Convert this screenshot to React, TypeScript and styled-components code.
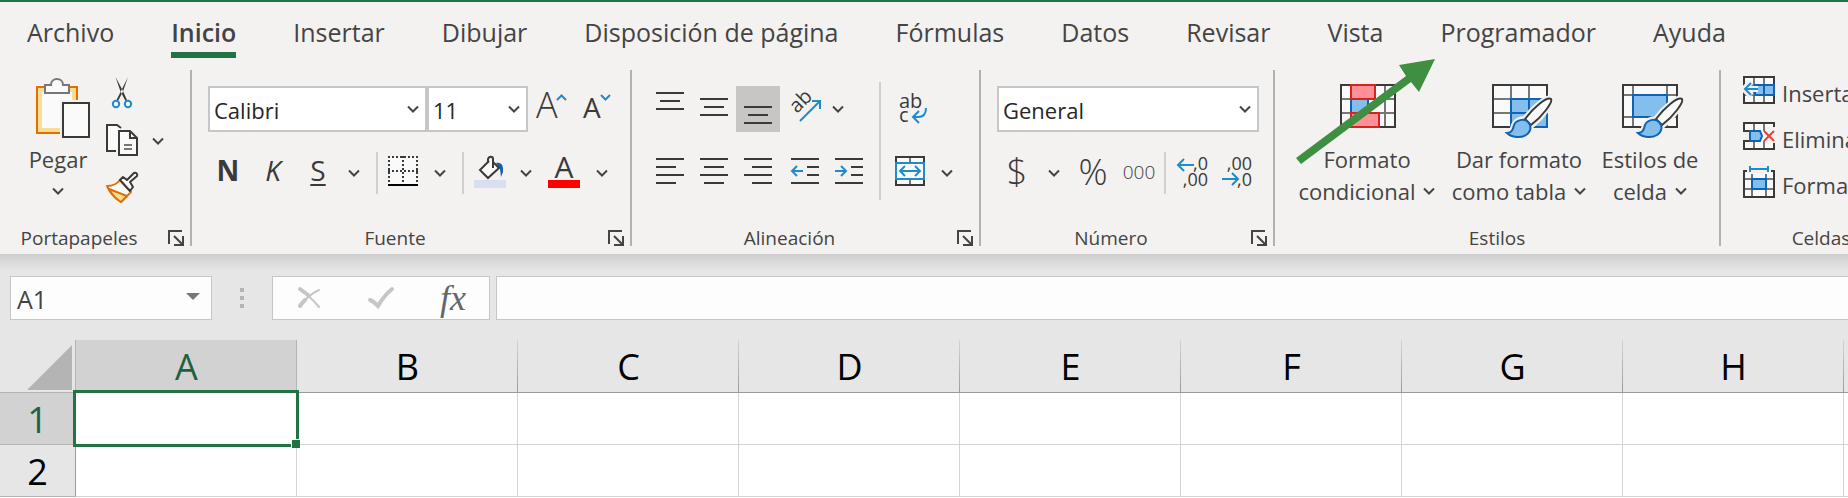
import React from "react";
import styled, { createGlobalStyle, css } from "styled-components";

const ink = "#3b3a39";
const text = "#444444";
const blue = "#1e8bcd";
const deepBlue = "#0f63b5";
const skyFill = "#83beec";
const paper = "#fafafa";
const ribbonBg = "#f3f2f1";
const green = "#217346";
const uiFont = `"Open Sans", "Noto Sans", sans-serif`;

const GlobalStyle = createGlobalStyle`
  *, *::before, *::after { box-sizing: border-box; }
  body { margin: 0; background: #ffffff; font-family: ${uiFont}; color: ${text}; }
  button, input, select { font-family: inherit; color: inherit; }
`;

const Page = styled.div`
  overflow: hidden;
`;

const TabBar = styled.nav`
  display: flex;
  gap: 57px;
  padding: 0 27px;
  border-top: 2px solid ${green};
  background: ${ribbonBg};
`;

const Tab = styled.button<{ $active?: boolean }>`
  flex: none;
  padding: 10px 0 0;
  border: 0;
  border-bottom: 6px solid ${(p) => (p.$active ? green : "transparent")};
  background: none;
  font-size: 25px;
  line-height: 40px;
  font-weight: ${(p) => (p.$active ? 600 : 400)};
  white-space: nowrap;
`;

const Ribbon = styled.div`
  display: flex;
  padding-top: 12px;
  background: ${ribbonBg};
`;

const Separator = styled.div`
  flex: none;
  width: 2px;
  margin-bottom: 8px;
  background: #b3b0ad;
`;

const Group = styled.section<{ $min?: number }>`
  flex: none;
  display: flex;
  flex-direction: column;
  justify-content: space-between;
  min-width: ${(p) => p.$min || 0}px;
  height: 184px;
  padding-bottom: 4px;
`;

const GroupBody = styled.div<{ $top?: number; $end?: number; $start?: number }>`
  display: flex;
  padding: ${(p) => p.$top || 0}px ${(p) => p.$end ?? 14}px 0 ${(p) => p.$start ?? 16}px;
`;

const GroupFooter = styled.footer`
  display: flex;
  align-items: center;
  height: 24px;
`;

const GroupTitle = styled.span`
  flex: 1;
  font-size: 19px;
  line-height: 24px;
  text-align: center;
`;

const Launcher = styled.button`
  display: flex;
  width: 32px;
  padding: 0 0 0 10px;
  border: 0;
  background: none;
`;

const Stack = styled.div<{ $gap?: number }>`
  display: flex;
  flex-direction: column;
  gap: ${(p) => p.$gap || 0}px;
`;

const ToolRow = styled.div<{ $gap?: number; $tall?: boolean }>`
  display: flex;
  align-items: center;
  gap: ${(p) => p.$gap || 0}px;
  height: ${(p) => (p.$tall ? 46 : 42)}px;
`;

const ToolPair = styled.div`
  display: flex;
  align-items: center;
  margin-left: 3px;
`;

const ToolButton = styled.button<{ $width?: number; $active?: boolean }>`
  flex: none;
  display: flex;
  align-items: center;
  justify-content: center;
  width: ${(p) => p.$width || 40}px;
  height: 100%;
  padding: 0;
  border: 0;
  background: ${(p) => (p.$active ? "#c8c6c4" : "none")};
  color: ${ink};

  svg { flex: none; overflow: visible; }
`;

const GlyphButton = styled(ToolButton)<{ $size: number; $kind?: "bold" | "italic" | "underline" | "light" }>`
  padding-bottom: 6px;
  font-size: ${(p) => p.$size}px;
  line-height: 36px;
  ${(p) => p.$kind === "bold" && css`font-weight: 700;`}
  ${(p) => p.$kind === "italic" && css`font-style: italic;`}
  ${(p) => p.$kind === "light" && css`font-weight: 300; padding-bottom: 2px;`}
  ${(p) =>
    p.$kind === "underline" &&
    css`text-decoration: underline 2px; text-underline-offset: 3px;`}
`;

const Divider = styled.div`
  flex: none;
  width: 2px;
  height: 42px;
  margin: 0 1px 0 6px;
  background: #d2d0ce;
`;

const SlimDivider = styled(Divider)`
  margin: 0 2px 0 1px;
`;

const TallDivider = styled(Divider)`
  height: 118px;
  margin: -4px 7px -6px 8px;
`;

const ComboWrap = styled.label<{ $width: number }>`
  flex: none;
  display: grid;
  grid-template-columns: 1fr 24px;
  align-items: center;
  width: ${(p) => p.$width}px;
  height: 46px;
  border: 2px solid #c6c6c6;
  background: #ffffff;

  svg { grid-area: 1 / 2; justify-self: center; pointer-events: none; }
`;

const ComboSelect = styled.select`
  grid-area: 1 / 1 / 2 / 3;
  width: 100%;
  height: 42px;
  padding: 2px 24px 0 4px;
  border: 0;
  background: transparent;
  color: #262626;
  font-size: 22px;
  appearance: none;
  outline: 0;
`;

const Combos = styled.div`
  display: flex;
`;

const LargeButton = styled.button<{ $width: number }>`
  position: relative;
  flex: none;
  display: flex;
  flex-direction: column;
  align-items: center;
  width: ${(p) => p.$width}px;
  padding: 8px 0 0;
  border: 0;
  background: none;
  font-size: 22px;
  line-height: 32px;
  white-space: nowrap;

  > svg:first-child { margin-bottom: 5px; overflow: visible; }
`;

const LargeLine = styled.span`
  display: flex;
  align-items: center;
  justify-content: center;
  gap: 8px;
  height: 32px;
`;

const ClipRow = styled.div`
  display: flex;
  align-items: center;
  gap: 8px;
  height: 47px;
`;

const CellsButton = styled.button`
  display: flex;
  align-items: center;
  gap: 7px;
  height: 46px;
  padding: 0;
  border: 0;
  background: none;
  font-size: 22px;
  line-height: 32px;
  white-space: nowrap;
`;

const Pointer = styled.svg`
  position: absolute;
  left: 0;
  top: -16px;
  z-index: 2;
  pointer-events: none;
`;

const FormulaBar = styled.div`
  display: flex;
  align-items: center;
  padding: 22px 0 20px 10px;
  background: linear-gradient(#cdcdcd, #e6e6e6 16px);
`;

const NameBox = styled.label`
  flex: none;
  display: flex;
  align-items: center;
  width: 202px;
  height: 44px;
  padding-right: 11px;
  border: 1px solid #c6c6c6;
  background: #fdfdfd;
`;

const NameInput = styled.input`
  flex: 1;
  min-width: 0;
  height: 40px;
  padding: 2px 0 0 6px;
  border: 0;
  background: transparent;
  font-size: 25px;
  outline: 0;
`;

const Grip = styled.div`
  flex: none;
  display: flex;
  flex-direction: column;
  align-items: center;
  gap: 4px;
  width: 60px;

  i { width: 4px; height: 4px; background: #b4b4b4; }
`;

const FormulaTools = styled.div`
  flex: none;
  display: flex;
  width: 218px;
  height: 44px;
  margin-right: 6px;
  border: 1px solid #c6c6c6;
  background: #fdfdfd;
`;

const FxLabel = styled.span`
  font: italic 36px/40px "Liberation Serif", serif;
  color: #666666;
`;

const FormulaInput = styled.input`
  flex: 1;
  min-width: 0;
  height: 44px;
  padding: 0 8px;
  border: 1px solid #c6c6c6;
  border-right: 0;
  background: #fdfdfd;
  font-size: 25px;
  outline: 0;
`;

const Sheet = styled.table`
  width: 100%;
  min-width: 1900px;
  table-layout: fixed;
  border-collapse: separate;
  border-spacing: 0;
  font-size: 36px;
  line-height: 48px;
  color: #000000;

  th, td { height: 52px; padding: 2px 0 0; font-weight: 400; }
  thead th { height: 53px; }
`;

const NumberCol = styled.col`
  width: 76px;
`;

const LetterCol = styled.col`
  width: 221px;
`;

const Corner = styled.th`
  border-bottom: 1px solid #b4b4b4;
  border-right: 1px solid #b4b4b4;
  background: #e6e6e6;

  svg { display: block; margin: 0 0 0 26px; }
`;

const ColumnHead = styled.th<{ $active?: boolean }>`
  border-bottom: 1px solid #9b9b9b;
  color: ${(p) => (p.$active ? "#1e6140" : "#000000")};
  background: ${(p) =>
    p.$active
      ? "linear-gradient(#b4b4b4, #b4b4b4) right / 1px 100% no-repeat #d2d2d2"
      : "linear-gradient(#d4d4d4, #9b9b9b) right / 1px 100% no-repeat #e6e6e6"};
`;

const RowHead = styled.th<{ $active?: boolean }>`
  border-right: 1px solid #9b9b9b;
  border-bottom: 1px solid #b4b4b4;
  color: ${(p) => (p.$active ? "#1e6140" : "#000000")};
  background: ${(p) => (p.$active ? "#d2d2d2" : "#e6e6e6")};
`;

const Cell = styled.td`
  position: relative;
  border-right: 1px solid #d4d4d4;
  border-bottom: 1px solid #d4d4d4;
  background: #ffffff;
`;

const Selection = styled.div`
  position: absolute;
  inset: -3px;
  z-index: 1;
  border: 3px solid ${green};
`;

const FillHandle = styled.div`
  position: absolute;
  right: -4px;
  bottom: -4px;
  z-index: 2;
  width: 9px;
  height: 9px;
  border-left: 1px solid #ffffff;
  border-top: 1px solid #ffffff;
  background: ${green};
`;

const Chevron = () => (
  <svg width="12" height="8" viewBox="0 0 12 8" fill="none" stroke={text} strokeWidth="2">
    <path d="M1 1.5 6 6.5l5-5" />
  </svg>
);

const DropButton = ({ label, width = 22 }: { label: string; width?: number }) => (
  <ToolButton $width={width} aria-label={label}>
    <Chevron />
  </ToolButton>
);

const LauncherIcon = () => (
  <svg width="16" height="16" viewBox="0 0 16 16" fill="none" stroke={text} strokeWidth="2">
    <path d="M1 14V1h13M6 6l8 8M15 6v9H6" />
  </svg>
);

const Footer = ({ title, launcher }: { title: string; launcher?: boolean }) => (
  <GroupFooter>
    <GroupTitle>{title}</GroupTitle>
    {launcher && (
      <Launcher aria-label={`Opciones de ${title}`}>
        <LauncherIcon />
      </Launcher>
    )}
  </GroupFooter>
);

const Combo = ({ label, value, width }: { label: string; value: string; width: number }) => (
  <ComboWrap $width={width}>
    <ComboSelect aria-label={label} defaultValue={value}>
      <option>{value}</option>
    </ComboSelect>
    <Chevron />
  </ComboWrap>
);

const PasteIcon = () => (
  <svg width="64" height="60" viewBox="0 0 64 60" strokeWidth="2">
    <path d="M11 9h40v46H11z" fill="#fbdc94" stroke="#e07000" />
    <path d="M16 14h30v36H16z" fill={paper} />
    <path d="M19 15V7h6c0-4 3-6 6-6s6 2 6 6h6v8z" fill={paper} stroke="#777777" />
    <path d="M34 22h30v38H34z" fill={ribbonBg} />
    <path d="M37 25h26v34H37z" fill={paper} stroke={ink} />
  </svg>
);

const CutIcon = () => (
  <svg width="32" height="33" viewBox="0 0 32 33" fill="none">
    <path d="M9.500 0 16.500 13 21 23l-1.500 1L14.500 14.500zM22 0l-6.500 13L10.500 23l1.500 1 5-9.500z" fill={ink} />
    <g stroke={blue} strokeWidth="2">
      <circle cx="10" cy="27" r="3.200" />
      <circle cx="22" cy="27" r="3.200" />
    </g>
  </svg>
);

const CopyIcon = () => (
  <svg width="32" height="33" viewBox="0 0 32 33" fill={paper} stroke={ink} strokeWidth="2">
    <path d="M10 27H1V1h10l4 3" />
    <path d="M13 7h11l7 7v17H13z" />
    <path d="M24 7v7h7" fill="none" />
    <path d="M18 21h8M18 25h8" stroke="#777777" />
  </svg>
);

const PainterIcon = () => (
  <svg width="32" height="33" viewBox="0 0 32 33" strokeWidth="2" strokeLinejoin="round">
    <path d="M1 15c5 0 10-2 13-6l11 12-10 10C9 27 4 22 1 15z" fill={paper} stroke="#e07000" />
    <path d="M3 18l18 7-6 6C10 28 6 24 3 18z" fill="#fbdc94" stroke="#e07000" />
    <path d="M14 9l3-3 4 3 7-7c2-1 4 1 3 3l-7 6 3 5-3 4z" fill={paper} stroke={ink} />
  </svg>
);

const GrowFontIcon = () => (
  <svg width="32" height="32" viewBox="0 0 32 32">
    <text x="-1" y="25" fontSize="36" fontWeight="300" fill={ink}>A</text>
    <path d="M20 7l4.500-4.500L29 7" fill="none" stroke={blue} strokeWidth="2" />
  </svg>
);

const ShrinkFontIcon = () => (
  <svg width="32" height="32" viewBox="0 0 32 32">
    <text x="1" y="25" fontSize="28" fill={ink}>A</text>
    <path d="M19 2l4.500 4.500L28 2" fill="none" stroke={blue} strokeWidth="2" />
  </svg>
);

const BordersIcon = () => (
  <svg width="32" height="32" viewBox="0 0 32 32" fill="none" stroke={ink} strokeWidth="2">
    <path d="M0 0h30v28H0z" fill={paper} stroke="none" />
    <path d="M0 0h30M0 14h30M1-1v26M15-1v26M29-1v26" strokeDasharray="2 2" />
    <path d="M0 28h30" stroke="#000000" />
  </svg>
);

const FillIcon = () => (
  <svg width="32" height="32" viewBox="0 0 32 32" fill="none" strokeWidth="2">
    <path d="M0 23h32v8H0z" fill="#d9dff0" />
    <path d="M22 6c4-1 7 1 7 6v3l-2 5-1-8z" fill={deepBlue} />
    <path d="M15 4L6 13l8 8 11-10-6-6" fill={paper} stroke={ink} />
    <path d="M14 6V2c1-3 5-3 5 0v9" stroke={ink} />
  </svg>
);

const FontColorIcon = () => (
  <svg width="32" height="32" viewBox="0 0 32 32">
    <text x="16" y="21" fontSize="30" textAnchor="middle" fill={ink}>A</text>
    <path d="M0 23h32v8H0z" fill="#ff0000" />
  </svg>
);

const Lines = ({ d }: { d: string }) => (
  <svg width="32" height="34" viewBox="0 0 32 34" fill="none" stroke={ink} strokeWidth="2">
    <path d={d} />
  </svg>
);

const IndentIcon = ({ out }: { out?: boolean }) => (
  <svg width="32" height="34" viewBox="0 0 32 34" fill="none" stroke={ink} strokeWidth="2">
    <path d="M2 3h28M18 11h12M18 19h12M2 27h28" />
    <path d={out ? "M14 15H3M8 10l-5 5 5 5" : "M2 15h11M8 10l5 5-5 5"} stroke={blue} />
  </svg>
);

const OrientationIcon = () => (
  <svg width="32" height="34" viewBox="0 0 32 34">
    <text x="0" y="0" fontSize="20" fill={ink} transform="translate(8 22) rotate(-45)">ab</text>
    <path d="M11 29l20-20M23 9h8v8" fill="none" stroke={blue} strokeWidth="2" />
  </svg>
);

const WrapIcon = () => (
  <svg width="32" height="34" viewBox="0 0 32 34" fill={ink}>
    <text x="5" y="16" fontSize="20">ab</text>
    <text x="5" y="30" fontSize="20">c</text>
    <path d="M32 16c0 6-3 9-8 9h-5M25 19l-6 6 6 6" fill="none" stroke={blue} strokeWidth="2" />
  </svg>
);

const MergeIcon = () => (
  <svg width="32" height="34" viewBox="0 0 32 34" fill={paper} strokeWidth="2">
    <path d="M2 1h28v28H2z" stroke={ink} />
    <path d="M16 2v4M16 24v4" stroke="#777777" />
    <path d="M2 7h28v16H2z" stroke={blue} />
    <path d="M6 15h20M11 10l-5 5 5 5M21 10l5 5-5 5" fill="none" stroke={blue} />
  </svg>
);

const MoreDecimalsIcon = () => (
  <svg width="32" height="34" viewBox="0 0 32 34" fill={ink} fontSize="18" textAnchor="end">
    <text x="32" y="14">,0</text>
    <text x="32" y="30">,00</text>
    <path d="M18 9H2M8 3L2 9l6 6" fill="none" stroke={blue} strokeWidth="2" />
  </svg>
);

const FewerDecimalsIcon = () => (
  <svg width="32" height="34" viewBox="0 0 32 34" fill={ink} fontSize="18" textAnchor="end">
    <text x="30" y="14">,00</text>
    <text x="30" y="30">,0</text>
    <path d="M0 23h16M10 17l6 6-6 6" fill="none" stroke={blue} strokeWidth="2" />
  </svg>
);

const ConditionalIcon = () => (
  <svg width="64" height="60" viewBox="0 0 64 60" fill="none" strokeWidth="2">
    <path d="M6 7h54v42H6z" fill={paper} />
    <path d="M6 21h54M6 35h54M50 7v42" stroke="#777777" />
    <path d="M6 7h54v42H6z" stroke={ink} />
    <path d="M16 21h17v14H16z" fill={skyFill} stroke={deepBlue} />
    <path d="M34 22h15v12H34z" fill={paper} />
    <path d="M16 7h24v14H16zM16 35h28v14H16z" fill="#ff9097" stroke="#d8231c" />
  </svg>
);

const PaintBrush = () => (
  <>
    <path
      d="M64 21c2 3-8 17-19 26l-3 3c1 3-1 6-4 8-5 3-13 1-18-3 5 0 6-4 7-8 2-4 6-6 11-6C46 30 60 18 64 21z"
      fill={ribbonBg}
      stroke={ribbonBg}
      strokeWidth="6"
    />
    <path d="M64 21c2 3-8 17-20 26l-6-6C46 30 60 18 64 21z" fill={paper} stroke={ink} />
    <path d="M20 55c5 0 6-4 7-8 2-5 10-7 14-3s3 10-2 13-14 3-19-2z" fill={skyFill} stroke={deepBlue} />
  </>
);

const TableFormatIcon = () => (
  <svg width="64" height="60" viewBox="0 0 64 60" fill="none" strokeWidth="2">
    <path d="M6 7h54v42H6z" fill={paper} />
    <path d="M6 21h54M6 35h54M24 7v42M42 7v42" stroke="#777777" />
    <path d="M6 7h54v42H6z" stroke={ink} />
    <path d="M24 21h36v28H24z" fill={skyFill} stroke={deepBlue} />
    <path d="M24 35h36M42 21v28" stroke={deepBlue} />
    <PaintBrush />
  </svg>
);

const CellStylesIcon = () => (
  <svg width="64" height="60" viewBox="0 0 64 60" fill="none" strokeWidth="2">
    <path d="M5 7h54v42H5z" fill={paper} />
    <path d="M5 17h54M5 39h54M15 7v42M49 7v42" stroke="#777777" />
    <path d="M5 7h54v42H5z" stroke={ink} />
    <path d="M15 17h34v22H15z" fill={skyFill} stroke={deepBlue} />
    <PaintBrush />
  </svg>
);

const InsertCellsIcon = () => (
  <svg width="32" height="38" viewBox="0 0 32 38" fill="none" strokeWidth="2">
    <path d="M1 3h30v26H1z" fill={paper} />
    <path d="M1 11h30M1 21h30M11 3v26M21 3v26" stroke="#777777" />
    <path d="M1 3h30v26H1z" stroke={ink} />
    <path d="M12 11h19v10H12z" fill={skyFill} stroke={deepBlue} />
    <path d="M21 11v10" stroke={deepBlue} />
    <path d="M15 15H2M8 8l-7 7 7 7" stroke={ribbonBg} strokeWidth="6" />
    <path d="M15 15H2M8 9l-6 6 6 6" stroke={blue} />
  </svg>
);

const DeleteCellsIcon = () => (
  <svg width="32" height="38" viewBox="0 0 32 38" fill="none" strokeWidth="2">
    <path d="M1 3h30v26H1z" fill={paper} />
    <path d="M11 3v8M21 3v8M11 21v8M21 21v8" stroke="#777777" />
    <path d="M7 11H1V3h30v7M7 21H1v8h30v-8" stroke={ink} />
    <path d="M0 12h6v8H0zM22 7h10v16H22z" fill={ribbonBg} />
    <path d="M7 11h10l2 5-2 5H7z" fill={skyFill} stroke={deepBlue} />
    <path d="M21 11l10 10M31 11L21 21" stroke="#e8423c" />
  </svg>
);

const FormatCellsIcon = () => (
  <svg width="32" height="38" viewBox="0 0 32 38" fill="none" strokeWidth="2">
    <path d="M1 7h30v24H1z" fill={paper} />
    <path d="M1 13h30M1 23h30M9 8v23M23 8v23" stroke="#777777" />
    <path d="M4 5H1v26h30V5h-3" stroke={ink} />
    <path d="M9 13h14v10H9z" fill={skyFill} stroke={deepBlue} />
    <path d="M7 3h18M7 0v6M25 0v6" stroke={blue} />
  </svg>
);

const tabs = [
  "Archivo", "Inicio", "Insertar", "Dibujar", "Disposición de página", "Fórmulas",
  "Datos", "Revisar", "Vista", "Programador", "Ayuda",
];

const columns = ["A", "B", "C", "D", "E", "F", "G", "H"];
const rows = [1, 2];

export default function App() {
  return (
    <Page>
      <GlobalStyle />
      <TabBar>
        {tabs.map((name) => (
          <Tab key={name} $active={name === "Inicio"}>{name}</Tab>
        ))}
      </TabBar>

      <Ribbon>
        <Group>
          <GroupBody $start={10} $end={20}>
            <LargeButton $width={96}>
              <PasteIcon />
              <LargeLine>Pegar</LargeLine>
              <LargeLine><Chevron /></LargeLine>
            </LargeButton>
            <Stack>
              <ClipRow>
                <ToolButton $width={32} aria-label="Cortar"><CutIcon /></ToolButton>
              </ClipRow>
              <ClipRow>
                <ToolButton $width={32} aria-label="Copiar"><CopyIcon /></ToolButton>
                <DropButton label="Opciones de copiar" width={24} />
              </ClipRow>
              <ClipRow>
                <ToolButton $width={32} aria-label="Copiar formato"><PainterIcon /></ToolButton>
              </ClipRow>
            </Stack>
          </GroupBody>
          <Footer title="Portapapeles" launcher />
        </Group>
        <Separator />

        <Group>
          <GroupBody $top={16} $end={12}>
            <Stack $gap={20}>
              <ToolRow $tall $gap={5}>
                <Combos>
                  <Combo label="Fuente" value="Calibri" width={219} />
                  <Combo label="Tamaño de fuente" value="11" width={101} />
                </Combos>
                <ToolButton aria-label="Aumentar tamaño"><GrowFontIcon /></ToolButton>
                <ToolButton aria-label="Disminuir tamaño"><ShrinkFontIcon /></ToolButton>
              </ToolRow>
              <ToolRow $gap={5}>
                <GlyphButton $size={28} $kind="bold">N</GlyphButton>
                <GlyphButton $size={28} $kind="italic">K</GlyphButton>
                <GlyphButton $size={28} $kind="underline">S</GlyphButton>
                <DropButton label="Opciones de subrayado" />
                <Divider />
                <ToolButton aria-label="Bordes"><BordersIcon /></ToolButton>
                <DropButton label="Opciones de bordes" />
                <Divider />
                <ToolButton aria-label="Color de relleno"><FillIcon /></ToolButton>
                <DropButton label="Opciones de relleno" />
                <ToolButton $width={44} aria-label="Color de fuente"><FontColorIcon /></ToolButton>
                <DropButton label="Opciones de color" />
              </ToolRow>
            </Stack>
          </GroupBody>
          <Footer title="Fuente" launcher />
        </Group>
        <Separator />

        <Group>
          <GroupBody $top={16} $end={21}>
            <Stack $gap={20}>
              <ToolRow $tall>
                <ToolButton $width={44} aria-label="Alinear arriba"><Lines d="M2 1h28M6 9h20M2 17h28" /></ToolButton>
                <ToolButton $width={44} aria-label="Alinear en el medio"><Lines d="M2 7h28M6 15h20M2 23h28" /></ToolButton>
                <ToolButton $width={44} $active aria-label="Alinear abajo"><Lines d="M2 15h28M6 23h20M2 31h28" /></ToolButton>
                <ToolPair>
                  <ToolButton $width={44} aria-label="Orientación"><OrientationIcon /></ToolButton>
                  <DropButton label="Opciones de orientación" />
                </ToolPair>
              </ToolRow>
              <ToolRow>
                <ToolButton $width={44} aria-label="Alinear a la izquierda"><Lines d="M2 3h28M2 11h20M2 19h28M2 27h20" /></ToolButton>
                <ToolButton $width={44} aria-label="Centrar"><Lines d="M2 3h28M6 11h20M2 19h28M6 27h20" /></ToolButton>
                <ToolButton $width={44} aria-label="Alinear a la derecha"><Lines d="M2 3h28M10 11h20M2 19h28M10 27h20" /></ToolButton>
                <ToolPair>
                  <ToolButton $width={44} aria-label="Disminuir sangría"><IndentIcon out /></ToolButton>
                  <ToolButton $width={44} aria-label="Aumentar sangría"><IndentIcon /></ToolButton>
                </ToolPair>
              </ToolRow>
            </Stack>
            <TallDivider />
            <Stack $gap={20}>
              <ToolRow $tall>
                <ToolButton $width={44} aria-label="Ajustar texto"><WrapIcon /></ToolButton>
              </ToolRow>
              <ToolRow $gap={4}>
                <ToolButton $width={44} aria-label="Combinar y centrar"><MergeIcon /></ToolButton>
                <DropButton label="Opciones de combinar" />
              </ToolRow>
            </Stack>
          </GroupBody>
          <Footer title="Alineación" launcher />
        </Group>
        <Separator />

        <Group>
          <GroupBody $top={16} $end={13}>
            <Stack $gap={20}>
              <ToolRow $tall>
                <Combo label="Formato de número" value="General" width={262} />
              </ToolRow>
              <ToolRow $gap={2}>
                <GlyphButton $size={36} $kind="light">$</GlyphButton>
                <DropButton label="Opciones de moneda" width={30} />
                <GlyphButton $size={36} $kind="light" $width={44}>%</GlyphButton>
                <GlyphButton $size={19} $kind="light" $width={44}>000</GlyphButton>
                <SlimDivider />
                <ToolButton $width={44} aria-label="Aumentar decimales"><MoreDecimalsIcon /></ToolButton>
                <ToolButton $width={44} aria-label="Disminuir decimales"><FewerDecimalsIcon /></ToolButton>
              </ToolRow>
            </Stack>
          </GroupBody>
          <Footer title="Número" launcher />
        </Group>
        <Separator />

        <Group>
          <GroupBody>
            <LargeButton $width={152}>
              <ConditionalIcon />
              <LargeLine>Formato</LargeLine>
              <LargeLine>condicional <Chevron /></LargeLine>
              <Pointer width="152" height="112" viewBox="0 0 152 112" aria-hidden="true">
                <path d="M5 104L115 22l-7-11 36-6-16 33-8-10L10 110z" fill="#3f8f42" />
              </Pointer>
            </LargeButton>
            <LargeButton $width={152}>
              <TableFormatIcon />
              <LargeLine>Dar formato</LargeLine>
              <LargeLine>como tabla <Chevron /></LargeLine>
            </LargeButton>
            <LargeButton $width={110}>
              <CellStylesIcon />
              <LargeLine>Estilos de</LargeLine>
              <LargeLine>celda <Chevron /></LargeLine>
            </LargeButton>
          </GroupBody>
          <Footer title="Estilos" />
        </Group>
        <Separator />

        <Group $min={200}>
          <GroupBody $start={22}>
            <Stack>
              <CellsButton><InsertCellsIcon />Insertar <Chevron /></CellsButton>
              <CellsButton><DeleteCellsIcon />Eliminar <Chevron /></CellsButton>
              <CellsButton><FormatCellsIcon />Formato <Chevron /></CellsButton>
            </Stack>
          </GroupBody>
          <Footer title="Celdas" />
        </Group>
      </Ribbon>

      <FormulaBar>
        <NameBox>
          <NameInput aria-label="Cuadro de nombres" defaultValue="A1" />
          <svg width="14" height="14" viewBox="0 0 14 14" fill="#777777">
            <path d="M0 2h14L7 9z" />
          </svg>
        </NameBox>
        <Grip><i /><i /><i /></Grip>
        <FormulaTools>
          <ToolButton $width={72} aria-label="Cancelar">
            <svg width="24" height="22" viewBox="0 0 24 22" fill="none" stroke="#c6c6c6" strokeLinecap="round">
              <path d="M3 2c6 4 13 11 19 18" strokeWidth="2" />
              <path d="M22 3C15 6 7 13 3 19" strokeWidth="2" />
              <path d="M8 13c-2 2-4 4-5 6M3 2l8 6" strokeWidth="4" />
            </svg>
          </ToolButton>
          <ToolButton $width={72} aria-label="Introducir">
            <svg width="26" height="22" viewBox="0 0 26 22" fill="none" stroke="#c6c6c6" strokeWidth="4" strokeLinecap="round">
              <path d="M2 13c3 1 5 3 8 6C14 12 18 7 24 2" />
            </svg>
          </ToolButton>
          <ToolButton $width={72} aria-label="Insertar función"><FxLabel>fx</FxLabel></ToolButton>
        </FormulaTools>
        <FormulaInput aria-label="Barra de fórmulas" />
      </FormulaBar>

      <Sheet>
        <colgroup>
          <NumberCol />
          {columns.map((c) => <LetterCol key={c} />)}
          <col />
        </colgroup>
        <thead>
          <tr>
            <Corner>
              <svg width="46" height="46" viewBox="0 0 46 46" fill="#b4b4b4">
                <path d="M46 1v45H1z" />
              </svg>
            </Corner>
            {columns.map((c) => <ColumnHead key={c} scope="col" $active={c === "A"}>{c}</ColumnHead>)}
            <ColumnHead />
          </tr>
        </thead>
        <tbody>
          {rows.map((r) => (
            <tr key={r}>
              <RowHead scope="row" $active={r === 1}>{r}</RowHead>
              {columns.map((c) => (
                <Cell key={c}>
                  {r === 1 && c === "A" && (
                    <>
                      <Selection />
                      <FillHandle />
                    </>
                  )}
                </Cell>
              ))}
              <Cell />
            </tr>
          ))}
        </tbody>
      </Sheet>
    </Page>
  );
}
